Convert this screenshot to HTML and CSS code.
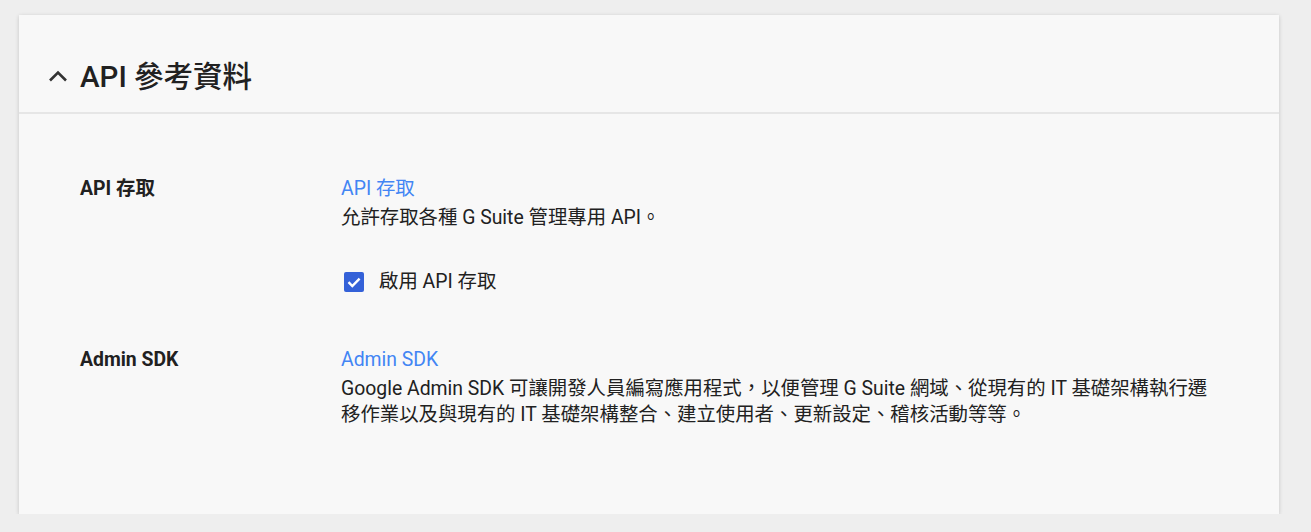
FILE: index.html
```html
<!DOCTYPE html>
<html lang="zh-Hant">
<head>
<meta charset="utf-8">
<title>API 參考資料</title>
<link rel="stylesheet" href="styles.css">
</head>
<body>
<section class="card">
  <header class="card-header">
    <svg class="chevron" width="20" height="20" viewBox="0 0 20 20" aria-hidden="true"><path d="M2 14.5 L10 6.5 L18 14.5" fill="none" stroke="#333" stroke-width="2.6"/></svg>
    <h1 class="title">API 參考資料</h1>
  </header>
  <div class="card-body">
    <div class="row">
      <div class="label">API 存取</div>
      <div class="content">
        <a class="link" href="#">API 存取</a>
        <p class="desc">允許存取各種 G Suite 管理專用 API。</p>
        <label class="check-row">
          <span class="checkbox"><svg width="20" height="20" viewBox="0 0 20 20" aria-hidden="true"><path d="M4.5 10.2 L8.3 14 L15.6 6.6" fill="none" stroke="#fff" stroke-width="2.4"/></svg></span>
          <span class="check-label">啟用 API 存取</span>
        </label>
      </div>
    </div>
    <div class="row">
      <div class="label">Admin SDK</div>
      <div class="content">
        <a class="link" href="#">Admin SDK</a>
        <p class="desc">Google Admin SDK 可讓開發人員編寫應用程式，以便管理 G Suite 網域、從現有的 IT 基礎架構執行遷移作業以及與現有的 IT 基礎架構整合、建立使用者、更新設定、稽核活動等等。</p>
      </div>
    </div>
  </div>
</section>
</body>
</html>
```

FILE: styles.css
```css
html, body {
  margin: 0;
  padding: 0;
}
body {
  background: #eeeeee;
  font-family: Roboto, "Noto Sans CJK TC", sans-serif;
  color: #212121;
  padding: 15px 0 0 19px;
}
.card {
  width: 1260px;
  height: 499px;
  box-sizing: border-box;
  background: #f8f8f8;
  box-shadow: 0 1px 4px rgba(0,0,0,0.18);
}
.card-header {
  display: flex;
  align-items: center;
  height: 99px;
  box-sizing: border-box;
  padding: 45px 0 18px 29px;
  border-bottom: 2px solid #e6e6e6;
}
.chevron {
  display: block;
  margin-right: 12px;
  margin-top: -2px;
}
.title {
  margin: 0;
  font-size: 29.5px;
  line-height: 36px;
  font-weight: 500;
  color: #212121;
}
.card-body {
  display: flex;
  flex-direction: column;
  gap: 52px;
  padding: 62px 0 0 61px;
}
.row {
  display: flex;
}
.label {
  width: 261px;
  flex: none;
  font-size: 19.4px;
  line-height: 26px;
  font-weight: 700;
}
.content {
  width: 880px;
  font-size: 19.4px;
  line-height: 26px;
}
.link {
  display: block;
  color: #4285f4;
  text-decoration: none;
  margin-bottom: 3px;
}
.desc {
  margin: 0;
}
.check-row {
  display: flex;
  align-items: center;
  margin-top: 38px;
  height: 26px;
}
.checkbox {
  width: 20px;
  height: 20px;
  margin-left: 3px;
  margin-right: 15px;
  background: #3461d8;
  border-radius: 2px;
  display: flex;
}
.checkbox svg {
  display: block;
}
```
